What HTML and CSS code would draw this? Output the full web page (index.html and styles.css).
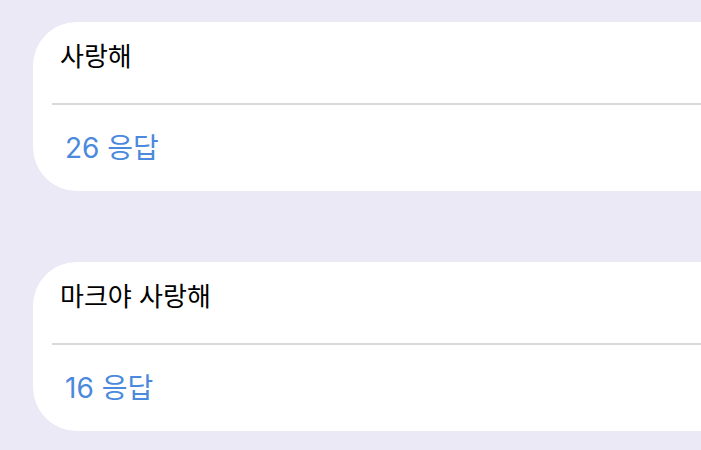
FILE: index.html
```html
<!DOCTYPE html>
<html lang="ko">
<head>
  <meta charset="UTF-8">
  <meta name="viewport" content="width=device-width, initial-scale=1.0">
  <title>응답</title>
  <link rel="stylesheet" href="styles.css">
</head>
<body>
  <div class="list">
    <div class="card">
      <div class="card-title">사랑해</div>
      <div class="divider"></div>
      <div class="card-count">26 응답</div>
    </div>
    <div class="card">
      <div class="card-title">마크야 사랑해</div>
      <div class="divider"></div>
      <div class="card-count">16 응답</div>
    </div>
  </div>
</body>
</html>
```
FILE: styles.css
```css
:root {
  --bg-color: #ece9f6;
  --card-color: #fff;
  --line-color: #d9d9db;
  --text-color: #000;
  --link-color: #4a89dc;
}

html, body {
  margin: 0;
  height: 100%;
  overflow: hidden;
}

body {
  background-color: var(--bg-color);
  font-family: "Inter", "Noto Sans CJK KR", sans-serif;
}

.list {
  display: flex;
  flex-direction: column;
  gap: 71px;
  padding: 22px 0 0 33px;
}

.card {
  background-color: var(--card-color);
  border-radius: 44px 0 0 44px;
  margin-right: -40px;
  height: 169px;
  display: flex;
  flex-direction: column;
}

.card-title {
  height: 81px;
  box-sizing: border-box;
  padding: 19px 0 0 27px;
  font-size: 26px;
  line-height: 32px;
  color: var(--text-color);
}

.divider {
  height: 2px;
  margin-left: 19px;
  background-color: var(--line-color);
}

.card-count {
  flex: 1;
  box-sizing: border-box;
  padding: 27px 0 0 32px;
  font-size: 28px;
  line-height: 32px;
  color: var(--link-color);
}
```
